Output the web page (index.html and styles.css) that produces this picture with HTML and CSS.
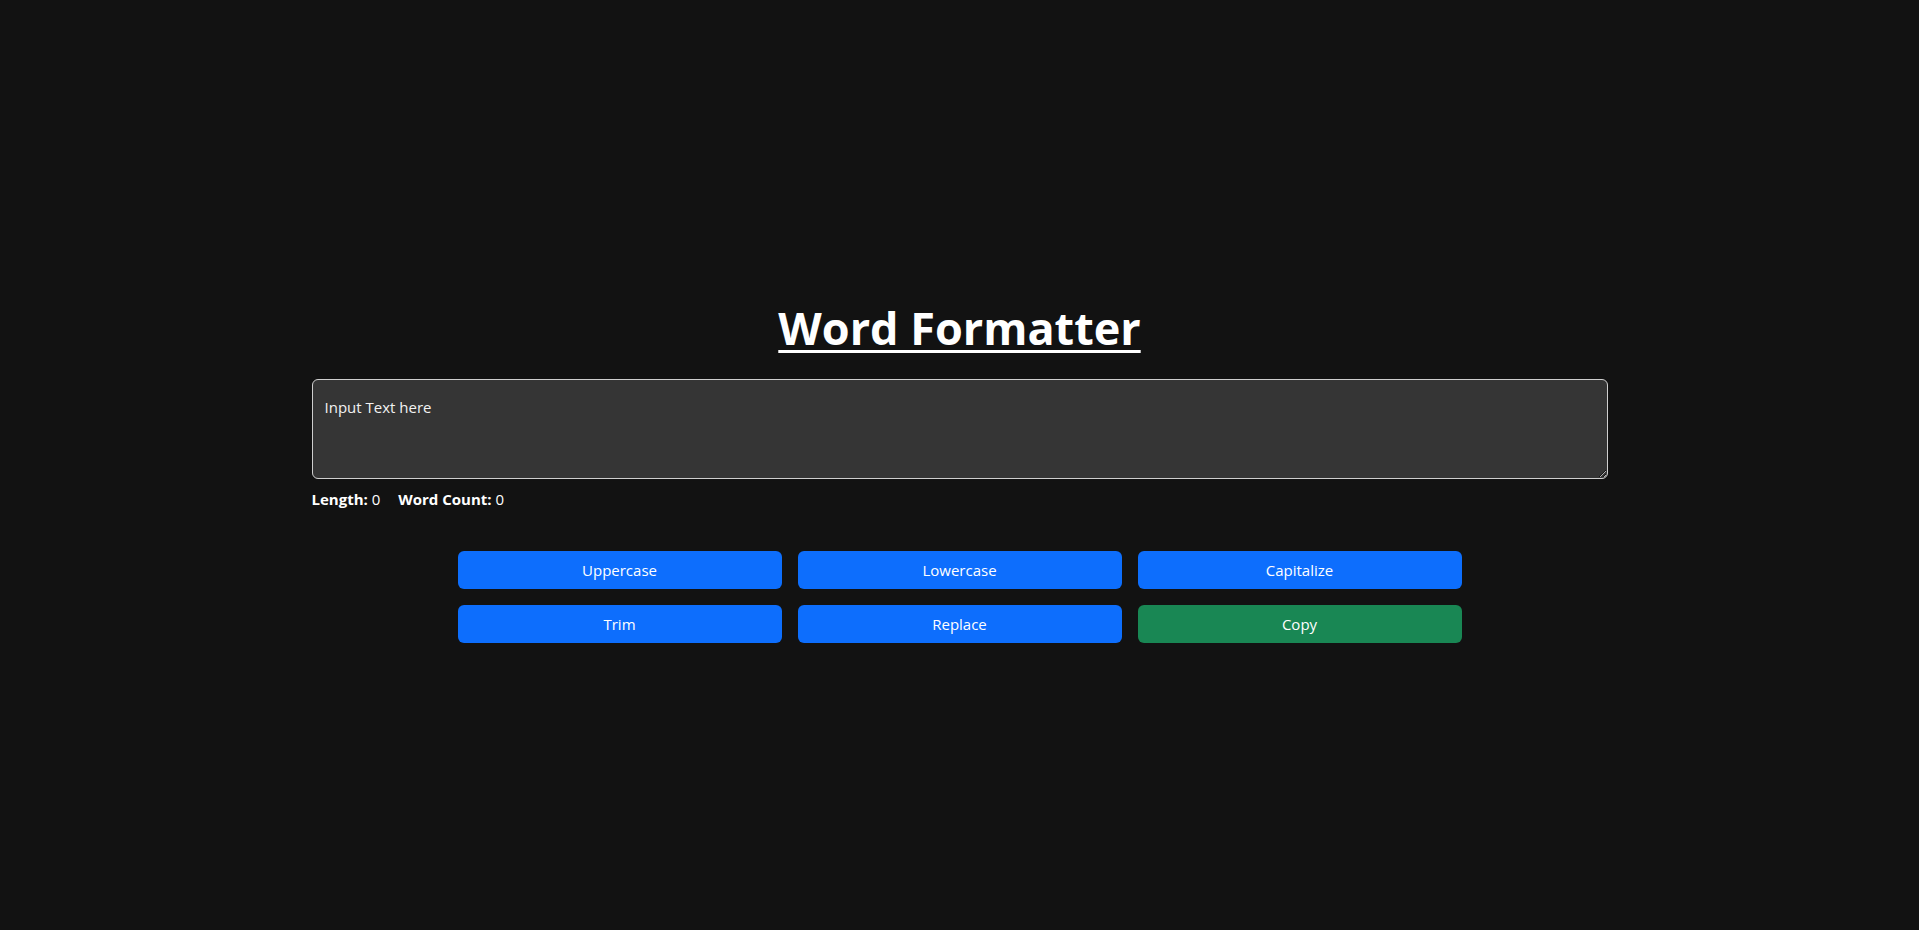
FILE: index.html
```html
<!DOCTYPE html>
<html lang="en">
<head>
<meta charset="utf-8">
<title>Word Formatter</title>
<link rel="stylesheet" href="styles.css">
</head>
<body>
<main class="app">
  <h1 class="title">Word Formatter</h1>
  <textarea class="input" placeholder="Input Text here"></textarea>
  <p class="stats"><b>Length:</b> 0 <span class="gap"></span><b>Word Count:</b> 0</p>
  <div class="actions">
    <button class="btn primary">Uppercase</button>
    <button class="btn primary">Lowercase</button>
    <button class="btn primary">Capitalize</button>
    <button class="btn primary">Trim</button>
    <button class="btn primary">Replace</button>
    <button class="btn success">Copy</button>
  </div>
</main>
</body>
</html>
```

FILE: styles.css
```css
html, body {
  margin: 0;
  padding: 0;
  background: #121212;
  color: #fff;
  font-family: "Open Sans", "Noto Sans", sans-serif;
  font-size: 16px;
}

.app {
  width: 1296px;
  margin: 0 auto;
  padding-top: 301px;
  display: flex;
  flex-direction: column;
}

.title {
  margin: 0 0 24px;
  text-align: center;
  font-size: 45px;
  font-weight: 700;
  line-height: 1.2;
  text-decoration: underline;
  text-decoration-thickness: 3px;
  text-underline-offset: 5px;
}

.input {
  box-sizing: border-box;
  width: 1296px;
  height: 100px;
  padding: 15px 12px;
  background: #353535;
  color: #f2f2f2;
  border: 1px solid #cfcfcf;
  border-radius: 6px;
  font-family: inherit;
  font-size: 15px;
  line-height: 24px;
}

.input::placeholder {
  color: #f2f2f2;
  opacity: 1;
}

.stats {
  margin: 8px 0 0;
  font-size: 15px;
  line-height: 24px;
}

.stats .gap {
  display: inline-block;
  width: 14px;
}

.actions {
  margin: 40px auto 0;
  display: grid;
  grid-template-columns: repeat(3, 324px);
  gap: 16px;
}

.btn {
  height: 38px;
  border: 0;
  border-radius: 6px;
  color: #fff;
  font-family: inherit;
  font-size: 15px;
}

.primary { background: #0d6efd; }
.success { background: #198754; }
```
